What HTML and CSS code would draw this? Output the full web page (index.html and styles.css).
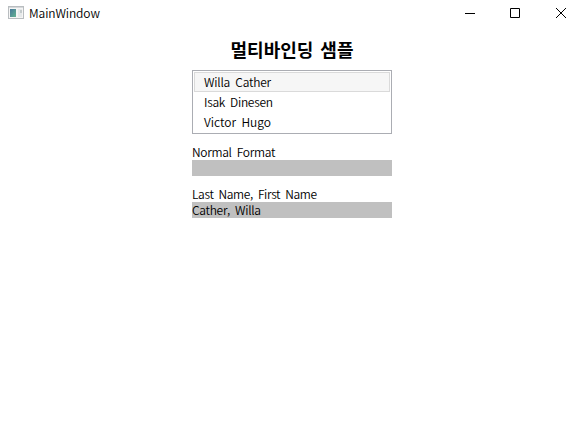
FILE: index.html
```html
<!DOCTYPE html>
<html lang="ko">
<head>
<meta charset="utf-8">
<title>MainWindow</title>
<link rel="stylesheet" href="styles.css">
</head>
<body>
<header class="titlebar">
  <svg class="app-icon" width="16" height="14" viewBox="0 0 16 14">
    <defs><linearGradient id="g" x1="0" y1="0" x2="1" y2="1"><stop offset="0" stop-color="#47779a"/><stop offset="1" stop-color="#63b391"/></linearGradient></defs>
    <rect x=".5" y=".5" width="15" height="12" fill="#f5f5f5" stroke="#b9bdc0"/>
    <path d="M1 1.500h14" stroke="#d5d8da"/>
    <rect x="2" y="3" width="6" height="8" fill="url(#g)"/>
    <path d="M10 3h4v8h-4z" fill="#e6e9ea"/>
    <path d="M12 4h2v3h-2z" fill="#c3cacc"/>
  </svg>
  <span class="caption">MainWindow</span>
  <div class="controls">
    <svg width="46" height="26" viewBox="0 0 46 26"><path d="M18 13.5h10"/></svg>
    <svg width="45" height="26" viewBox="0 0 45 26"><path d="M17.500 8.500h9v9h-9z"/></svg>
    <svg width="46" height="26" viewBox="0 0 46 26"><path d="M18 8l10 10M28 8l-10 10"/></svg>
  </div>
</header>
<main class="content">
  <h1 class="heading">멀티바인딩 샘플</h1>
  <ul class="list">
    <li class="item selected">Willa Cather</li>
    <li class="item">Isak Dinesen</li>
    <li class="item wide">Victor Hugo</li>
  </ul>
  <div class="label">Normal Format</div>
  <div class="value"></div>
  <div class="label long">Last Name, First Name</div>
  <div class="value">Cather, Willa</div>
</main>
</body>
</html>
```
FILE: styles.css
```css
body { margin: 0; background: #fff; color: #000; font: 350 12px/16px "Noto Sans CJK KR", sans-serif; letter-spacing: -0.3px; word-spacing: 2px; overflow: hidden; }
.titlebar { display: flex; align-items: center; height: 26px; padding-left: 8px; }
.caption { margin-left: 5px; letter-spacing: -0.1px; }
.controls { display: flex; margin-left: auto; }
.controls path { fill: none; stroke: #000; }
.content { width: 200px; margin: 0 auto; }
.heading { margin: 10px 0 8px; font-size: 18px; line-height: 26px; letter-spacing: 0; text-align: center; white-space: nowrap; }
.list { box-sizing: border-box; height: 64px; margin: 0 0 10px; padding: 1px; border: 1px solid #abadb3; list-style: none; }
.item { box-sizing: border-box; height: 20px; padding: 1px 9px; border: 1px solid transparent; }
.selected { background: #f6f6f6; border-color: #dadada; letter-spacing: -0.2px; }
.wide { letter-spacing: 0; }
.long { letter-spacing: -0.35px; }
.value { height: 16px; margin-bottom: 10px; background: #c0c0c0; }
```
